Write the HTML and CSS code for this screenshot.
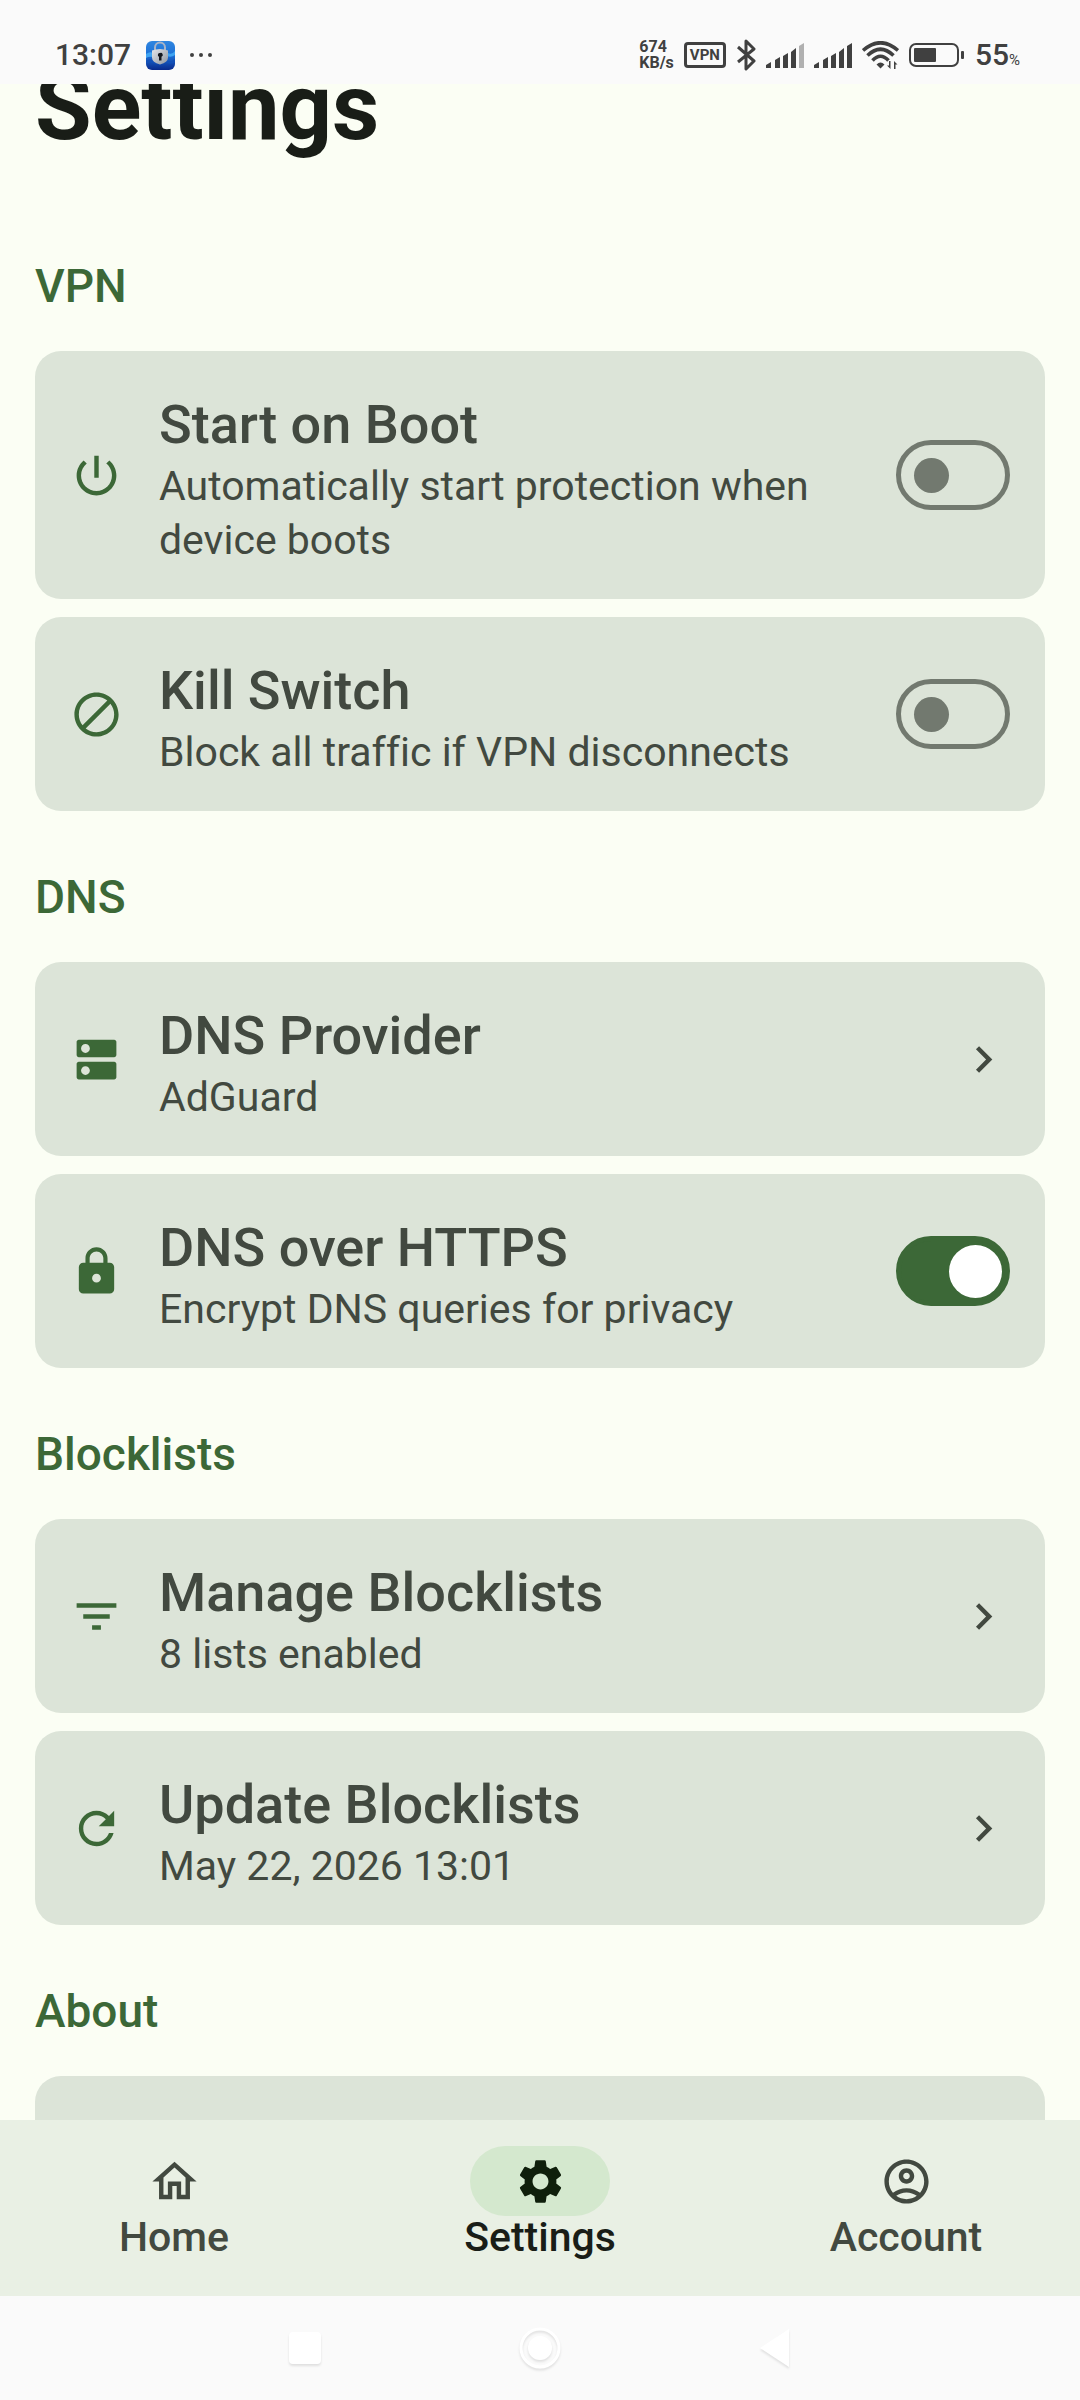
FILE: index.html
```html
<!DOCTYPE html>
<html lang="en">
<head>
    <meta charset="UTF-8">
    <meta name="viewport" content="width=device-width, initial-scale=1.0">
    <title>Settings</title>
    <link rel="stylesheet" href="styles.css">
</head>
<body>
    <!-- Status bar -->
    <header class="status-bar">
        <div class="status-left">
            <span class="clock">13:07</span>
            <svg class="app-icon" viewBox="0 0 29 29" aria-hidden="true">
                <defs>
                    <linearGradient id="sea" x1="0" y1="0" x2="0" y2="1">
                        <stop offset="0" stop-color="#2f86e0"/>
                        <stop offset="0.5" stop-color="#1c6fd6"/>
                        <stop offset="1" stop-color="#0a2a8c"/>
                    </linearGradient>
                    <linearGradient id="steel" x1="0" y1="0" x2="1" y2="1">
                        <stop offset="0" stop-color="#e4e6ea"/>
                        <stop offset="1" stop-color="#8f959f"/>
                    </linearGradient>
                </defs>
                <rect width="29" height="29" rx="6" fill="url(#sea)"/>
                <path d="M0 13q4-3 7-1t7 0 8 0 7-2v4q-4 3-8 1t-7 0-7 1-7 1z" fill="#3fa4f2"/>
                <path d="M0 20q4-3 7-1t7 1 8 0 7-2v3q-4 3-8 1t-7 0-7 0-7 1z" fill="#1250b8"/>
                <path d="M9 11V6.500a5 5 0 0 1 10 0V11" fill="none" stroke="#a9b4c6" stroke-width="2"/>
                <path d="M6 9.500q8-3 16 0v7q0 5-8 7-8-2-8-7z" fill="url(#steel)"/>
                <path d="M14 12a2 2 0 0 0-1 3.800V19.500h2.500V15.800A2 2 0 0 0 14 12z" fill="#15181f"/>
            </svg>
            <svg class="more-icon" viewBox="0 0 24 6" aria-hidden="true">
                <circle cx="3" cy="3" r="2"/>
                <circle cx="12" cy="3" r="2"/>
                <circle cx="21" cy="3" r="2"/>
            </svg>
        </div>
        <div class="status-right">
            <span class="net-speed">674<br>KB/s</span>
            <span class="vpn-badge">VPN</span>
            <svg class="bluetooth" viewBox="0 0 20 32" aria-hidden="true">
                <path d="M2 8l16 14-8 8V2l8 8L2 23" fill="none" stroke="currentColor" stroke-width="3" stroke-linejoin="round"/>
            </svg>
            <svg class="signal" viewBox="0 0 38 25" aria-hidden="true">
                <path d="M0 25v-3l5-3v6zM9 25v-8l5-3v11zM17 25V13l5-3v15zM25 25V9l5-4v20z"/>
                <path d="M33 25V3l5-3v25z" opacity="0.4"/>
            </svg>
            <svg class="signal" viewBox="0 0 38 25" aria-hidden="true">
                <path d="M0 25v-3l5-3v6zM9 25v-8l5-3v11zM17 25V13l5-3v15zM25 25V9l5-4v20zM33 25V3l5-3v25z"/>
            </svg>
            <svg class="wifi" viewBox="0 0 37 28" aria-hidden="true">
                <g fill="none" stroke="currentColor" stroke-width="3.600">
                    <path d="M1 9.500Q18.500-6 36 9.500"/>
                    <path d="M5.500 14.500Q18.500 2 31.500 14.500"/>
                    <path d="M10.500 19.500Q18.500 11 26.500 19.500"/>
                </g>
                <path d="M14.500 23.500q4-4 8 0l-4 4z"/>
                <path d="M28.500 20v8l-3.500-3.500h2V20zM32 28v-8l3.500 3.500h-2V28z"/>
            </svg>
            <svg class="battery" viewBox="0 0 56 26" aria-hidden="true">
                <rect x="1" y="2" width="48" height="22" rx="6" fill="none" stroke="currentColor" stroke-width="2"/>
                <rect x="5" y="6" width="22" height="14" rx="1"/>
                <rect x="52" y="9" width="3" height="8" rx="1"/>
            </svg>
            <span class="battery-level">55<small>%</small></span>
        </div>
    </header>

    <main class="content">
        <h1>Settings</h1>

        <!-- VPN -->
        <section class="group">
            <h2>VPN</h2>
            <label class="card">
                <svg class="icon" viewBox="0 0 24 24" aria-hidden="true"><path d="M13 3h-2v10h2V3zm4.830 2.170l-1.420 1.420C17.990 7.860 19 9.810 19 12c0 3.870-3.130 7-7 7s-7-3.130-7-7c0-2.190 1.010-4.140 2.580-5.420L6.170 5.170C4.230 6.820 3 9.260 3 12c0 4.970 4.030 9 9 9s9-4.030 9-9c0-2.740-1.230-5.180-3.170-6.830z"/></svg>
                <span class="card-text">
                    <span class="card-title">Start on Boot</span>
                    <span class="card-desc">Automatically start protection when device boots</span>
                </span>
                <input class="switch" type="checkbox" role="switch">
            </label>
            <label class="card">
                <svg class="icon" viewBox="0 0 24 24" aria-hidden="true"><path d="M12 2C6.480 2 2 6.480 2 12s4.480 10 10 10 10-4.480 10-10S17.520 2 12 2zM4 12c0-4.420 3.580-8 8-8 1.850 0 3.550.63 4.900 1.690L5.690 16.900C4.630 15.550 4 13.850 4 12zm8 8c-1.850 0-3.550-.63-4.900-1.690L18.310 7.100C19.370 8.450 20 10.150 20 12c0 4.420-3.580 8-8 8z"/></svg>
                <span class="card-text">
                    <span class="card-title">Kill Switch</span>
                    <span class="card-desc">Block all traffic if VPN disconnects</span>
                </span>
                <input class="switch" type="checkbox" role="switch">
            </label>
        </section>

        <!-- DNS -->
        <section class="group">
            <h2>DNS</h2>
            <a class="card" href="#">
                <svg class="icon" viewBox="0 0 24 24" aria-hidden="true"><path d="M20 13H4c-.55 0-1 .45-1 1v6c0 .55.45 1 1 1h16c.55 0 1-.45 1-1v-6c0-.55-.45-1-1-1zM7 19c-1.100 0-2-.9-2-2s.9-2 2-2 2 .9 2 2-.9 2-2 2zM20 3H4c-.55 0-1 .45-1 1v6c0 .55.45 1 1 1h16c.55 0 1-.45 1-1V4c0-.55-.45-1-1-1zM7 9c-1.100 0-2-.9-2-2s.9-2 2-2 2 .9 2 2-.9 2-2 2z"/></svg>
                <span class="card-text">
                    <span class="card-title">DNS Provider</span>
                    <span class="card-desc">AdGuard</span>
                </span>
                <svg class="icon chevron" viewBox="0 0 24 24" aria-hidden="true"><path d="M10 6L8.590 7.410 13.170 12l-4.580 4.590L10 18l6-6z"/></svg>
            </a>
            <label class="card">
                <svg class="icon" viewBox="0 0 24 24" aria-hidden="true"><path d="M18 8h-1V6c0-2.760-2.240-5-5-5S7 3.240 7 6v2H6c-1.100 0-2 .9-2 2v10c0 1.100.9 2 2 2h12c1.100 0 2-.9 2-2V10c0-1.100-.9-2-2-2zm-6 9c-1.100 0-2-.9-2-2s.9-2 2-2 2 .9 2 2-.9 2-2 2zm3.100-9H8.900V6c0-1.710 1.390-3.100 3.100-3.100s3.100 1.390 3.100 3.100v2z"/></svg>
                <span class="card-text">
                    <span class="card-title">DNS over HTTPS</span>
                    <span class="card-desc">Encrypt DNS queries for privacy</span>
                </span>
                <input class="switch" type="checkbox" role="switch" checked>
            </label>
        </section>

        <!-- Blocklists -->
        <section class="group">
            <h2>Blocklists</h2>
            <a class="card" href="#">
                <svg class="icon" viewBox="0 0 24 24" aria-hidden="true"><path d="M10 18h4v-2h-4v2zM3 6v2h18V6H3zm3 7h12v-2H6v2z"/></svg>
                <span class="card-text">
                    <span class="card-title">Manage Blocklists</span>
                    <span class="card-desc">8 lists enabled</span>
                </span>
                <svg class="icon chevron" viewBox="0 0 24 24" aria-hidden="true"><path d="M10 6L8.590 7.410 13.170 12l-4.580 4.590L10 18l6-6z"/></svg>
            </a>
            <a class="card" href="#">
                <svg class="icon" viewBox="0 0 24 24" aria-hidden="true"><path d="M17.650 6.350C16.200 4.900 14.210 4 12 4c-4.420 0-7.990 3.580-7.990 8s3.570 8 7.990 8c3.730 0 6.840-2.550 7.730-6h-2.080c-.82 2.330-3.040 4-5.650 4-3.310 0-6-2.690-6-6s2.690-6 6-6c1.660 0 3.140.69 4.220 1.780L13 11h7V4l-2.350 2.350z"/></svg>
                <span class="card-text">
                    <span class="card-title">Update Blocklists</span>
                    <span class="card-desc">May 22, 2026 13:01</span>
                </span>
                <svg class="icon chevron" viewBox="0 0 24 24" aria-hidden="true"><path d="M10 6L8.590 7.410 13.170 12l-4.580 4.590L10 18l6-6z"/></svg>
            </a>
        </section>

        <!-- About -->
        <section class="group">
            <h2>About</h2>
            <div class="card"></div>
        </section>
    </main>

    <!-- Bottom navigation -->
    <nav class="bottom-nav">
        <a class="nav-item" href="#">
            <span class="nav-pill">
                <svg class="icon" viewBox="0 0 24 24" aria-hidden="true"><path d="M12 5.690l5 4.500V18h-2v-6H9v6H7v-7.810l5-4.500M12 3L2 12h3v8h6v-6h2v6h6v-8h3L12 3z"/></svg>
            </span>
            <span class="nav-label">Home</span>
        </a>
        <a class="nav-item active" href="#" aria-current="page">
            <span class="nav-pill">
                <svg class="icon" viewBox="0 0 24 24" aria-hidden="true"><path d="M19.140 12.940c.04-.3.06-.61.06-.94 0-.32-.02-.64-.07-.94l2.030-1.580c.18-.14.23-.41.12-.61l-1.920-3.320c-.12-.22-.37-.29-.59-.22l-2.390.96c-.5-.38-1.030-.7-1.620-.94L14.400 2.810c-.04-.24-.24-.41-.48-.41h-3.840c-.24 0-.43.17-.47.41L9.250 5.350c-.59.24-1.130.57-1.620.94L5.240 5.330c-.22-.08-.47 0-.59.22L2.740 8.870c-.12.21-.08.47.12.61l2.030 1.580c-.05.3-.09.63-.09.94s.02.64.07.94l-2.030 1.580c-.18.14-.23.41-.12.61l1.920 3.320c.12.22.37.29.59.22l2.390-.96c.5.38 1.030.7 1.620.94l.36 2.540c.05.24.24.41.48.41h3.840c.24 0 .44-.17.47-.41l.36-2.540c.59-.24 1.130-.56 1.620-.94l2.390.96c.22.08.47 0 .59-.22l1.920-3.320c.12-.22.07-.47-.12-.61l-2.010-1.580zM12 15.600c-1.980 0-3.600-1.620-3.600-3.600s1.620-3.600 3.600-3.600 3.600 1.620 3.600 3.600-1.620 3.600-3.600 3.600z"/></svg>
            </span>
            <span class="nav-label">Settings</span>
        </a>
        <a class="nav-item" href="#">
            <span class="nav-pill">
                <svg class="icon" viewBox="0 0 24 24" aria-hidden="true"><path d="M12 2C6.480 2 2 6.480 2 12s4.480 10 10 10 10-4.480 10-10S17.520 2 12 2zM7.350 18.500C8.660 17.560 10.260 17 12 17s3.340.56 4.650 1.500C15.340 19.440 13.740 20 12 20s-3.340-.56-4.650-1.500zm10.790-1.380C16.450 15.800 14.320 15 12 15s-4.450.8-6.140 2.120C4.700 15.730 4 13.950 4 12c0-4.420 3.580-8 8-8s8 3.580 8 8c0 1.950-.7 3.730-1.860 5.120zM12 6c-1.930 0-3.500 1.570-3.500 3.500S10.070 13 12 13s3.500-1.570 3.500-3.500S13.930 6 12 6zm0 5c-.83 0-1.500-.67-1.500-1.500S11.170 8 12 8s1.500.67 1.500 1.500S12.830 11 12 11z"/></svg>
            </span>
            <span class="nav-label">Account</span>
        </a>
    </nav>

    <!-- System buttons -->
    <footer class="system-nav">
        <button type="button" aria-label="Recents">
            <svg viewBox="0 0 44 44" aria-hidden="true"><rect x="6" y="6" width="32" height="32" rx="4"/></svg>
        </button>
        <button type="button" aria-label="Home">
            <svg viewBox="0 0 44 44" aria-hidden="true">
                <circle cx="22" cy="22" r="19" fill="none" stroke="#fff" stroke-width="3"/>
                <circle cx="22" cy="22" r="12"/>
            </svg>
        </button>
        <button type="button" aria-label="Back">
            <svg viewBox="0 0 44 44" aria-hidden="true"><path d="M7 22L36 3v38z"/></svg>
        </button>
    </footer>
</body>
</html>
```
FILE: styles.css
```css
:root {
    --primary: #3c6837;
    --background: #fbfef4;
    --card: #dce4d8;
    --nav: #e9f0e4;
    --pill: #d4e8ce;
    --system: #fafafa;
    --text: #191d17;
    --text-muted: #424940;
    --outline: #72796f;
    --status: #404040;
}

* {
    margin: 0;
    padding: 0;
    box-sizing: border-box;
    font-family: Roboto, 'Noto Sans', sans-serif;
}

body {
    background-color: var(--background);
    color: var(--text);
    height: 100vh;
    display: flex;
    flex-direction: column;
}

a {
    color: inherit;
    text-decoration: none;
}

svg {
    display: block;
    flex-shrink: 0;
    fill: currentColor;
}

/* Status bar */
.status-bar {
    display: flex;
    align-items: center;
    justify-content: space-between;
    height: 84px;
    padding: 26px 60px 0 55px;
    background: var(--system);
    color: var(--status);
    flex-shrink: 0;
}

.status-left,
.status-right {
    display: flex;
    align-items: center;
}

.clock,
.battery-level {
    font-size: 30px;
    font-weight: 500;
    line-height: 36px;
}

.app-icon {
    width: 29px;
    height: 29px;
    margin: 0 14px 0 15px;
}

.more-icon {
    width: 24px;
    height: 6px;
}

.status-right {
    gap: 10px;
}

.net-speed {
    font-size: 16px;
    font-weight: 700;
    line-height: 16px;
}

.vpn-badge {
    padding: 0 3px;
    border: 3px solid var(--status);
    border-radius: 4px;
    font-size: 15px;
    font-weight: 700;
    line-height: 20px;
}

.bluetooth {
    width: 20px;
    height: 32px;
}

.signal {
    width: 38px;
    height: 25px;
}

.wifi {
    width: 37px;
    height: 28px;
}

.battery {
    width: 56px;
    height: 26px;
}

.battery-level small {
    font-size: 15px;
    font-weight: 400;
    line-height: 15px;
}

/* Scrolling content */
.content {
    flex: 1;
    min-height: 0;
    overflow: hidden;
    padding: 0 35px;
}

h1 {
    margin-top: -32px;
    margin-bottom: 36px;
    font-size: 92px;
    font-weight: 700;
    line-height: 112px;
}

.group {
    display: flex;
    flex-direction: column;
    gap: 18px;
    padding-top: 54px;
}

h2 {
    margin-bottom: 15px;
    color: var(--primary);
    font-size: 46px;
    font-weight: 500;
    line-height: 64px;
}

.card {
    display: flex;
    align-items: center;
    gap: 36px;
    min-height: 194px;
    padding: 32px 35px;
    border-radius: 26px;
    background: var(--card);
    color: var(--text-muted);
    flex-shrink: 0;
}

.icon {
    width: 53px;
    height: 53px;
}

.card .icon {
    color: var(--primary);
}

.card .chevron {
    color: var(--text-muted);
}

.card-text {
    display: flex;
    flex-direction: column;
    flex: 1;
    padding-top: 8px;
}

.card-title {
    font-size: 54px;
    font-weight: 500;
    line-height: 68px;
}

.card-desc {
    font-size: 41px;
    font-variant-ligatures: none;
    line-height: 54px;
}

/* Switch */
.switch {
    display: flex;
    align-items: center;
    appearance: none;
    width: 114px;
    height: 70px;
    padding-left: 13px;
    border: 5px solid var(--outline);
    border-radius: 35px;
    flex-shrink: 0;
}

.switch::before {
    content: '';
    width: 35px;
    height: 35px;
    border-radius: 50%;
    background: var(--outline);
}

.switch:checked {
    justify-content: flex-end;
    padding: 0 3px;
    border-color: var(--primary);
    background: var(--primary);
}

.switch:checked::before {
    width: 53px;
    height: 53px;
    background: #fff;
}

/* Bottom navigation */
.bottom-nav {
    display: flex;
    gap: 18px;
    height: 176px;
    padding-top: 26px;
    background: var(--nav);
    color: var(--text-muted);
    flex-shrink: 0;
}

.nav-item {
    display: flex;
    flex-direction: column;
    align-items: center;
    flex: 1;
}

.nav-pill {
    display: flex;
    align-items: center;
    justify-content: center;
    width: 140px;
    height: 70px;
    border-radius: 35px;
}

.nav-label {
    font-size: 41px;
    font-weight: 500;
    line-height: 42px;
}

.active .nav-pill {
    background: var(--pill);
    color: #0f1f0b;
}

.active .nav-label {
    color: var(--text);
}

/* System buttons */
.system-nav {
    display: flex;
    align-items: center;
    justify-content: center;
    gap: 191px;
    height: 104px;
    background: var(--system);
    flex-shrink: 0;
}

.system-nav button {
    border: none;
    background: none;
}

.system-nav svg {
    width: 44px;
    height: 44px;
    fill: #fff;
    filter: drop-shadow(0 2px 1px rgba(0, 0, 0, 0.1));
}
```
